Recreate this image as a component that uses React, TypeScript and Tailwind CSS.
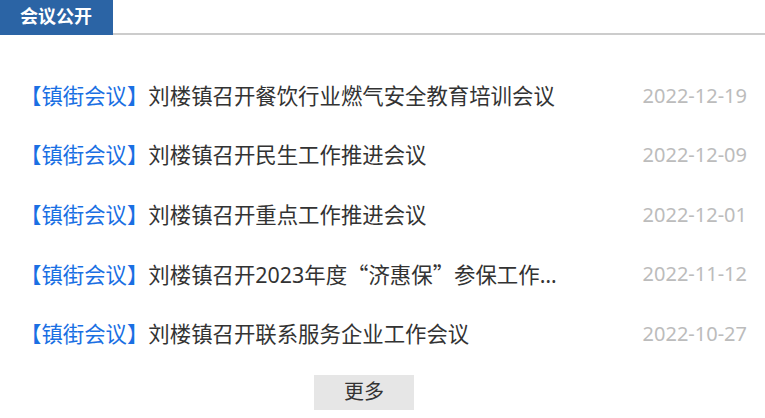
import React from 'react';

const cjk = '"Noto Sans CJK SC", sans-serif';

const items = [
  { title: '刘楼镇召开餐饮行业燃气安全教育培训会议', date: '2022-12-19' },
  { title: '刘楼镇召开民生工作推进会议', date: '2022-12-09' },
  { title: '刘楼镇召开重点工作推进会议', date: '2022-12-01' },
  { title: '刘楼镇召开2023年度“济惠保”参保工作推进会议', date: '2022-11-12' },
  { title: '刘楼镇召开联系服务企业工作会议', date: '2022-10-27' },
];

// wrap curly quotes so they render full-width from the CJK font
const renderTitle = (t: string) =>
  t.split(/([“”])/).map((part, i) =>
    part === '“' || part === '”' ? (
      <span key={i} style={{ fontFamily: cjk }}>
        {part}
      </span>
    ) : (
      part
    )
  );

export default function App() {
  return (
    <div
      className="w-[765px] h-[418px] bg-white overflow-hidden"
      style={{ fontFamily: '"Noto Sans", "Noto Sans CJK SC", sans-serif' }}
    >
      <div className="relative h-[35px]">
        <div className="absolute left-0 right-0 bottom-0 h-[2px] bg-[#cccccc]" />
        <div className="relative w-[113px] h-[35px] bg-[#2b64a5] text-white text-[18px] font-bold leading-[33px] pl-[20px]">
          会议公开
        </div>
      </div>

      <ul className="pt-[31px] pl-[20px] pr-[18px]">
        {items.map((item) => (
          <li key={item.date} className="h-[59.5px] flex items-center justify-between text-[21.4px]">
            <div className="w-[537px] truncate text-[#333333]">
              <span className="text-[#1a6fe3]">【镇街会议】</span>
              {renderTitle(item.title)}
            </div>
            <span className="text-[#bcbcbc] text-[20px]">{item.date}</span>
          </li>
        ))}
      </ul>

      <div className="mt-[11px] pl-[314px]">
        <button className="w-[100px] h-[35px] bg-[#e6e6e6] text-[#333333] text-[20px]">
          更多
        </button>
      </div>
    </div>
  );
}
